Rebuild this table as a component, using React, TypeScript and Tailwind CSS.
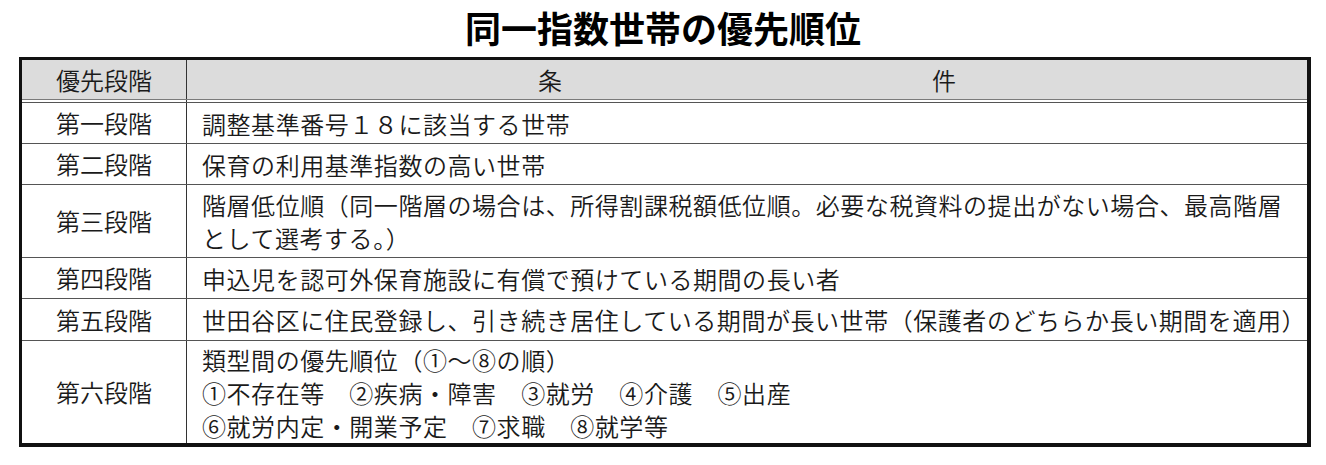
import React from "react";

// 同一指数世帯の優先順位 table
interface Row {
  stage: string;
  lines: string[];
}

const rows: Row[] = [
  { stage: "第一段階", lines: ["調整基準番号１８に該当する世帯"] },
  { stage: "第二段階", lines: ["保育の利用基準指数の高い世帯"] },
  {
    stage: "第三段階",
    lines: [
      "階層低位順（同一階層の場合は、所得割課税額低位順。必要な税資料の提出がない場合、最高階層",
      "として選考する。）",
    ],
  },
  { stage: "第四段階", lines: ["申込児を認可外保育施設に有償で預けている期間の長い者"] },
  {
    stage: "第五段階",
    lines: ["世田谷区に住民登録し、引き続き居住している期間が長い世帯（保護者のどちらか長い期間を適用）"],
  },
  {
    stage: "第六段階",
    lines: [
      "類型間の優先順位（①〜⑧の順）",
      "①不存在等　②疾病・障害　③就労　④介護　⑤出産",
      "⑥就労内定・開業予定　⑦求職　⑧就学等",
    ],
  },
];

const heights = ["h-[41px]", "h-[41px]", "h-[73px]", "h-[41px]", "h-[42px]", "h-[103px]"];

const App = () => {
  return (
    <div
      className="w-[1326px] h-[465px] bg-white text-[#1a1a1a]"
      style={{ fontFamily: '"Noto Sans CJK JP", "Noto Sans", sans-serif' }}
    >
      <h1 className="pt-[9px] pb-[12px] text-center text-[36px] leading-[36px] font-semibold text-black">
        同一指数世帯の優先順位
      </h1>

      <div className="ml-[19px] w-[1292px] border-[3px] border-r-4 border-b-4 border-[#111] font-[350]">
        {/* header */}
        <div className="grid grid-cols-[165px_1fr] h-[40px] bg-[#dcdcdc] border-b border-[#7a7a7a] text-[24px]">
          <div className="flex items-center justify-center border-r border-[#333]">優先段階</div>
          <div className="flex items-center justify-center gap-[370px]">
            <span>条</span>
            <span>件</span>
          </div>
        </div>
        <div className="grid grid-cols-[165px_1fr] h-[2px]">
          <div className="border-r border-[#333]" />
          <div />
        </div>

        {rows.map((row, i) => (
          <div
            key={row.stage}
            className={`grid grid-cols-[165px_1fr] border-t border-[#555] text-[24px] ${heights[i]}`}
          >
            <div className="flex items-center justify-center border-r border-[#333]">{row.stage}</div>
            <div className="flex flex-col justify-center pl-[15px] leading-[33px] tracking-[0.55px] whitespace-nowrap">
              {row.lines.map((line) => (
                <div key={line}>{line}</div>
              ))}
            </div>
          </div>
        ))}
      </div>
    </div>
  );
};

export default App;
